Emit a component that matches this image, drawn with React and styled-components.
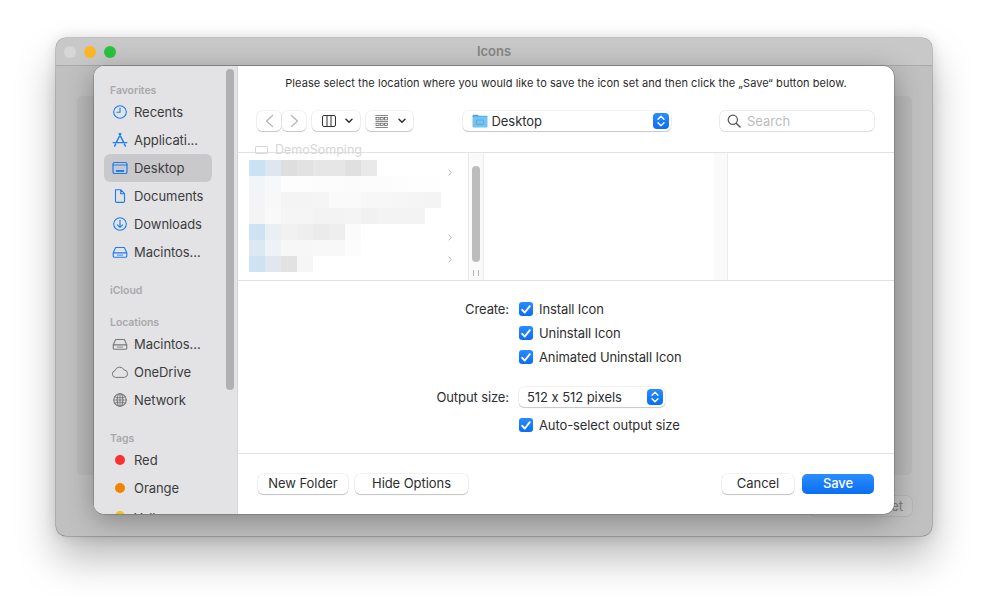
import React from 'react'
import styled, { createGlobalStyle } from 'styled-components'

const GlobalStyle = createGlobalStyle`
  html, body { margin: 0; padding: 0; background: #fff; }
  body { width: 988px; height: 610px; overflow: hidden; font-family: Inter, "Liberation Sans", sans-serif; font-feature-settings: "calt" 0; -webkit-font-smoothing: antialiased; }
`

const Page = styled.div`
  width: 988px;
  height: 610px;
  padding: 38px 0 0 56px;
  box-sizing: border-box;
`
const Window = styled.div`
  position: relative;
  width: 876px;
  height: 498px;
  border-radius: 10px;
  background: #c0c0c0;
  box-shadow: 0 0 0 .5px rgba(0,0,0,.35), 0 22px 40px rgba(0,0,0,.28), 0 0 14px rgba(0,0,0,.12);
  display: flex;
  flex-direction: column;
`
const TitleBar = styled.div`
  position: relative;
  height: 28px;
  flex: none;
  display: flex;
  align-items: center;
  justify-content: center;
  padding-bottom: 2px;
  box-sizing: border-box;
  border-radius: 10px 10px 0 0;
  background: #c8c8c8;
  border-bottom: 1px solid #a9a9a9;
`
const Lights = styled.div`
  position: absolute;
  left: 8px;
  top: 8px;
  display: flex;
  gap: 8px;
`
const Light = styled.span`
  width: 12px;
  height: 12px;
  border-radius: 50%;
  background: ${p => p.$c};
`
const WinTitle = styled.div`
  font-size: 13px;
  font-weight: 600;
  color: #858585;
`
const WinBody = styled.div`
  flex: 1;
  padding: 30px 20px 20px 21px;
  display: flex;
  flex-direction: column;
  border-radius: 0 0 10px 10px;
`
const Panel = styled.div`
  height: 379px;
  border-radius: 5px;
  background: rgba(0,0,0,.035);
`
const GhostBtn = styled.div`
  align-self: flex-end;
  margin-top: 21px;
  width: 102px;
  height: 20px;
  box-sizing: border-box;
  border-radius: 5px;
  background: rgba(255,255,255,.05);
  box-shadow: 0 0 0 .5px rgba(0,0,0,.1);
  color: #7d7d7d;
  font-size: 13px;
  line-height: 20px;
  text-align: center;
  white-space: nowrap;
`

/* sheet */
const Sheet = styled.div`
  position: absolute;
  left: 38px;
  top: 28px;
  width: 800px;
  height: 448px;
  border-radius: 10px;
  overflow: hidden;
  display: flex;
  background: #fff;
  box-shadow: 0 0 0 .5px rgba(0,0,0,.3), 0 6px 28px rgba(0,0,0,.32);
`
const Sidebar = styled.div`
  position: relative;
  width: 144px;
  flex: none;
  box-sizing: border-box;
  padding: 16px 25px 0 10px;
  background: #e3e3e5;
  border-right: 1px solid #d5d5d6;
  overflow: hidden;
  letter-spacing: -.06px;
`
const SideScroll = styled.div`
  position: absolute;
  left: 132px;
  top: 3px;
  width: 8px;
  height: 321px;
  border-radius: 4px;
  background: #b0b0b2;
`
const SideGroup = styled.div`
  margin-bottom: 16px;
`
const SideLabel = styled.div`
  height: 16px;
  line-height: 18px;
  padding-left: 6px;
  font-size: 10.5px;
  font-weight: 600;
  color: #a8a8aa;
`
const SideItem = styled.div`
  height: 28px;
  display: flex;
  align-items: center;
  padding-left: 4px;
  border-radius: 6px;
  font-size: 13px;
  color: #3c3c3e;
  white-space: nowrap;
  background: ${p => (p.$active ? '#c9c9cb' : 'transparent')};
`
const SideIcon = styled.span`
  width: 24px;
  height: 20px;
  margin-right: 2px;
  display: flex;
  align-items: center;
  justify-content: center;
  color: ${p => p.$c || '#1a7cf7'};
`
const TagDot = styled.span`
  width: 10px;
  height: 10px;
  border-radius: 50%;
  background: ${p => p.$c};
`
const TagName = styled.span`
  margin-top: ${p => p.$drop || 0}px;
`

const Main = styled.div`
  flex: 1;
  min-width: 0;
  display: flex;
  flex-direction: column;
`
const Header = styled.div`
  height: 87px;
  flex: none;
  box-sizing: border-box;
  padding-top: 9px;
  border-bottom: 1px solid #e2e2e2;
`
const Message = styled.div`
  height: 17px;
  line-height: 17px;
  text-align: center;
  font-size: 11px;
  letter-spacing: .06px;
  color: #2b2b2b;
  white-space: nowrap;
`
const Toolbar = styled.div`
  margin-top: 19px;
  padding: 0 20px 0 19px;
  display: flex;
  justify-content: space-between;
  align-items: center;
`
const ToolGroup = styled.div`
  display: flex;
  align-items: center;
  gap: ${p => p.$gap || 6}px;
`
const ToolBtn = styled.div`
  width: ${p => p.$w}px;
  height: 20px;
  box-sizing: border-box;
  padding-left: ${p => p.$pl || 0}px;
  border-radius: 5px;
  background: #fff;
  box-shadow: 0 0 0 .5px rgba(0,0,0,.1), 0 1px 1px rgba(0,0,0,.18);
  display: flex;
  align-items: center;
  justify-content: center;
  gap: ${p => p.$gap || 0}px;
`
const Popup = styled.div`
  width: ${p => p.$w}px;
  height: 20px;
  box-sizing: border-box;
  padding: 0 2px 0 ${p => p.$pl}px;
  border-radius: 5px;
  background: #fff;
  box-shadow: 0 0 0 .5px rgba(0,0,0,.1), 0 1px 1px rgba(0,0,0,.18);
  display: flex;
  align-items: center;
  font-size: 13px;
  letter-spacing: -.06px;
  color: #2e2e2e;
  white-space: nowrap;
`
const PopupText = styled.span`
  flex: 1;
  margin-left: ${p => p.$ml || 0}px;
  margin-bottom: 1px;
`
const Stepper = styled.span`
  width: 16px;
  height: 16px;
  border-radius: 4px;
  background: linear-gradient(#2a8cff, #0a6ff0);
  display: flex;
  align-items: center;
  justify-content: center;
`
const SearchBox = styled.div`
  width: 154px;
  height: 20px;
  box-sizing: border-box;
  padding-left: 7px;
  border-radius: 5px;
  background: #fff;
  box-shadow: 0 0 0 .5px rgba(0,0,0,.16), 0 1px 0 rgba(0,0,0,.05);
  display: flex;
  align-items: center;
  gap: 6px;
  font-size: 13px;
  color: #bcbcbc;
`

const Browser = styled.div`
  height: 128px;
  flex: none;
  box-sizing: border-box;
  display: flex;
  border-bottom: 1px solid #e2e2e2;
`
const ListCol = styled.div`
  position: relative;
  width: 231px;
  flex: none;
  box-sizing: border-box;
  padding: 7px 0 0 11px;
  border-right: 1px solid #e8e8e8;
`
const Ghost = styled.div`
  position: absolute;
  left: 17px;
  top: -10px;
  display: flex;
  align-items: center;
  gap: 7px;
  font-size: 12.5px;
  line-height: 14px;
  color: #d6d6d6;
  white-space: nowrap;
`
const GhostIcon = styled.span`
  width: 13px;
  height: 8px;
  box-sizing: border-box;
  border: 1px solid #d8d8d8;
  border-radius: 1px;
`
const RowArrow = styled.svg`
  position: absolute;
  left: 210px;
  top: ${p => p.$top}px;
  color: #b5b5b5;
`
const Track = styled.div`
  position: relative;
  width: ${p => p.$w}px;
  flex: none;
  box-sizing: border-box;
  background: #fafafa;
  border-right: 1px solid #ececec;
`
const Thumb = styled.div`
  position: absolute;
  left: 3px;
  top: 13px;
  width: 8px;
  height: 96px;
  border-radius: 4px;
  background: #bcbcbc;
`
const Grip = styled.div`
  position: absolute;
  left: 4px;
  bottom: 4px;
  width: 2px;
  height: 6px;
  border-left: 1px solid #b5b5b5;
  border-right: 1px solid #b5b5b5;
  padding: 0 1px;
  box-sizing: content-box;
`
const BlankCol = styled.div`
  width: ${p => p.$w}px;
  flex: ${p => (p.$w ? 'none' : 1)};
  box-sizing: border-box;
`

const Options = styled.div`
  flex: 1;
  box-sizing: border-box;
  padding-top: 16px;
  border-bottom: 1px solid #e2e2e2;
`
const OptRow = styled.div`
  display: grid;
  grid-template-columns: 271px auto;
  column-gap: 10px;
  align-items: center;
  height: 24px;
  margin-top: ${p => p.$mt || 0}px;
  font-size: 13px;
  letter-spacing: -.1px;
  color: #2e2e2e;
`
const OptLabel = styled.div`
  text-align: right;
`
const CheckLine = styled.div`
  display: flex;
  align-items: center;
  gap: 6px;
`
const CheckBox = styled.span`
  width: 14px;
  height: 14px;
  border-radius: 3px;
  background: linear-gradient(#2a8cff, #0a6ff0);
  display: flex;
  align-items: center;
  justify-content: center;
`

const Footer = styled.div`
  height: 60px;
  flex: none;
  box-sizing: border-box;
  padding: 20px 20px 0 20px;
  display: flex;
  justify-content: space-between;
  align-items: flex-start;
`
const Btn = styled.div`
  width: ${p => p.$w}px;
  height: 20px;
  line-height: 19px;
  text-align: center;
  border-radius: 5px;
  font-size: 13px;
  letter-spacing: -.06px;
  font-weight: ${p => (p.$primary ? 500 : 400)};
  color: ${p => (p.$primary ? '#fff' : '#2e2e2e')};
  background: ${p => (p.$primary ? 'linear-gradient(#2a8cff, #0a6ff0)' : '#fff')};
  box-shadow: ${p => (p.$primary ? 'none' : '0 0 0 .5px rgba(0,0,0,.1), 0 1px 1px rgba(0,0,0,.2)')};
`

const Svg = ({ w = 16, h = 16, vb = '0 0 16 16', children }) => (
  <svg width={w} height={h} viewBox={vb} fill="none" stroke="currentColor" strokeWidth="1.1" strokeLinecap="round" strokeLinejoin="round">
    {children}
  </svg>
)

const IconClock = () => <Svg><circle cx="8" cy="8" r="6.3" /><path d="M8 4v4.2H5" /></Svg>
const IconApps = () => (
  <Svg><path d="M8.8 1.6 4.2 10.6M7.2 1.6l4.6 9M1.2 10.6h13.6M3.6 12.2l-1 1.9M12.4 12.2l1 1.9" strokeWidth="1.4" /></Svg>
)
const IconDesktop = () => (
  <Svg><rect x="1" y="2.5" width="14" height="11" rx="1.6" strokeWidth="1.2" /><path d="M1 5h14" /><path d="M4 11h8" strokeWidth="2" strokeLinecap="butt" /></Svg>
)
const IconDoc = () => <Svg><path d="M3.5 1.7h5.2l3.8 4v7.4a1.3 1.3 0 0 1-1.3 1.3H4.8a1.3 1.3 0 0 1-1.3-1.3V1.7zM8.7 1.7v4h3.8" /></Svg>
const IconDown = () => <Svg><circle cx="8" cy="8" r="6.3" /><path d="M8 4.3v7M5.4 8.8 8 11.3l2.6-2.5" /></Svg>
const IconDisk = () => (
  <Svg>
    <path d="M3.6 3.5h8.8l2.4 5.4v3a1.4 1.4 0 0 1-1.4 1.4H2.6a1.4 1.4 0 0 1-1.4-1.4v-3zM1.2 8.9h13.6" />
    <path d="M5.8 11.1h.5M7.8 11.1h.5M9.8 11.1h.5" strokeWidth="1.2" />
  </Svg>
)
const IconCloud = () => (
  <svg width="18" height="14" viewBox="0 0 18 14" fill="#e3e3e5" stroke="currentColor" strokeWidth="1" strokeLinejoin="round">
    <path d="M4.6 12.4a3.4 3.4 0 0 1-.6-6.7 4.8 4.8 0 0 1 9-.8 3.8 3.8 0 0 1 .6 7.5z" />
  </svg>
)
const IconGlobe = () => (
  <Svg>
    <circle cx="8" cy="8" r="6.2" />
    <ellipse cx="8" cy="8" rx="2.8" ry="6.2" />
    <path d="M2.6 4.8c3 1.4 7.8 1.4 10.8 0M2.6 11.2c3-1.4 7.8-1.4 10.8 0M1.8 8h12.4M8 1.8v12.4" strokeWidth=".9" />
  </Svg>
)
const IconBack = () => <svg width="9" height="14" viewBox="0 0 9 14" fill="none" stroke="#b4b4b4" strokeWidth="1.2" strokeLinecap="round" strokeLinejoin="round"><path d="M7.5 1.5 1.5 7l6 5.5" /></svg>
const IconForward = () => <svg width="9" height="14" viewBox="0 0 9 14" fill="none" stroke="#b4b4b4" strokeWidth="1.2" strokeLinecap="round" strokeLinejoin="round"><path d="M1.5 1.5l6 5.5-6 5.5" /></svg>
const IconColumns = () => (
  <svg width="14" height="12" viewBox="0 0 14 12" fill="none" stroke="#333" strokeWidth="1"><rect x=".5" y=".5" width="13" height="11" rx="1.5" /><path d="M5 .5v11M9 .5v11" /></svg>
)
const IconGallery = () => (
  <svg width="14" height="13" viewBox="0 0 14 13" fill="none" stroke="#555" strokeWidth=".7">
    <path d="M.5.5h12.5M.5 6.5h12.5M.5 12.5h12.5" />
    <rect x="1" y="2.5" width="3" height="2.4" /><rect x="5.2" y="2.5" width="3" height="2.4" /><rect x="9.4" y="2.5" width="3" height="2.4" />
    <rect x="1" y="8.2" width="3" height="2.4" /><rect x="5.2" y="8.2" width="3" height="2.4" /><rect x="9.4" y="8.2" width="3" height="2.4" />
  </svg>
)
const IconCaret = () => (
  <svg width="8" height="6" viewBox="0 0 8 6" fill="none" stroke="#333" strokeWidth="1.5" strokeLinecap="round" strokeLinejoin="round"><path d="M1 1.2l3 3 3-3" /></svg>
)
const IconUpDown = () => (
  <svg width="8" height="12" viewBox="0 0 8 12" fill="none" stroke="#fff" strokeWidth="1.4" strokeLinecap="round" strokeLinejoin="round"><path d="M1 4.3 4 1.2l3 3.1M1 7.7l3 3.1 3-3.1" /></svg>
)
const IconFolder = () => (
  <svg width="16" height="14" viewBox="0 0 16 14">
    <path d="M.5 2c0-.8.5-1.2 1.2-1.2h3.6c.6 0 .9.5 1.4 1h8.1c.4 0 .7.3.7.7V3H.5z" fill="#4a9fd8" />
    <rect x=".5" y="2.6" width="15" height="10.9" rx="1.2" fill="#74c3f2" />
    <rect x="4.5" y="6" width="7" height="4.4" rx=".6" fill="none" stroke="#4ea6dc" strokeWidth=".8" />
  </svg>
)
const IconSearch = () => (
  <svg width="14" height="14" viewBox="0 0 14 14" fill="none" stroke="#555" strokeWidth="1.2" strokeLinecap="round"><circle cx="5.8" cy="5.8" r="4.6" /><path d="M9.2 9.2l3.8 3.8" strokeWidth="1.5" /></svg>
)
const IconCheck = () => (
  <svg width="10" height="9" viewBox="0 0 10 9" fill="none" stroke="#fff" strokeWidth="1.9" strokeLinecap="round" strokeLinejoin="round"><path d="M1.2 4.8 3.8 7.5 8.8 1.2" /></svg>
)

const favorites = [
  { name: 'Recents', icon: <IconClock /> },
  { name: 'Applicati...', icon: <IconApps /> },
  { name: 'Desktop', icon: <IconDesktop />, active: true },
  { name: 'Documents', icon: <IconDoc /> },
  { name: 'Downloads', icon: <IconDown /> },
  { name: 'Macintos...', icon: <IconDisk /> },
]
const locations = [
  { name: 'Macintos...', icon: <IconDisk /> },
  { name: 'OneDrive', icon: <IconCloud /> },
  { name: 'Network', icon: <IconGlobe /> },
]
const tags = [
  { name: 'Red', color: '#fb3131' },
  { name: 'Orange', color: '#f08400' },
  { name: 'Yellow', color: '#f2c511', drop: 3 },
]

// pixelated file names, 16px blocks
const mosaic = [
  ['#c9e3f5', '#dee6ef', '#dedede', '#e2e2e2', '#e6e6e6', '#e6e6e6', '#e0e0e0', '#e9e9e9'],
  ['#f1f5f7', '#f6f8fa', '#fdfdfd', '#fdfdfd', '#fcfcfc', '#fcfcfc', '#fbfbfb', '#fcfcfc', '#fcfcfc', '#fdfdfd', '#fefefe', '#fefefe'],
  ['#f4f3f5', '#f8f8f8', '#f4f4f4', '#f4f4f4', '#f5f5f5', '#fafafa', '#fafafa', '#f7f7f7', '#f7f7f7', '#f6f6f6', '#f5f5f5', '#f4f4f4'],
  ['#f4f4f4', '#f9f9f9', '#f5f5f5', '#f5f5f5', '#f3f3f3', '#f3f3f3', '#f4f4f4', '#f1f1f1', '#f3f3f3', '#f3f3f3', '#f3f3f3'],
  ['#cde3f3', '#e8f0f4', '#f1f1f1', '#eeeeee', '#ebebeb', '#eeeeee', '#fbfbfb'],
  ['#dce9f2', '#eef2f7', '#f7f7f7', '#f7f7f7', '#f8f8f8', '#f8f8f8', '#fcfcfc'],
  ['#cde3f3', '#e0e7ef', '#e2e2e2', '#f6f6f6'],
]

const Arrow = ({ top }) => (
  <RowArrow $top={top} width="4" height="7" viewBox="0 0 4 7" fill="none" stroke="currentColor" strokeWidth="1"><path d="M.7.7 3.3 3.5.7 6.3" /></RowArrow>
)

const Check = ({ children }) => (
  <CheckLine><CheckBox><IconCheck /></CheckBox>{children}</CheckLine>
)

export default function App() {
  return (
    <Page>
      <GlobalStyle />
      <Window>
        <TitleBar>
          <Lights>
            <Light $c="#d6d6d6" />
            <Light $c="#fdb728" />
            <Light $c="#27c43f" />
          </Lights>
          <WinTitle>Icons</WinTitle>
        </TitleBar>
        <WinBody>
          <Panel />
          <GhostBtn>Save Icon Set</GhostBtn>
        </WinBody>

        <Sheet>
          <Sidebar>
            <SideScroll />
            <SideGroup>
              <SideLabel>Favorites</SideLabel>
              {favorites.map(f => (
                <SideItem key={f.name} $active={f.active}>
                  <SideIcon>{f.icon}</SideIcon>{f.name}
                </SideItem>
              ))}
            </SideGroup>
            <SideGroup>
              <SideLabel>iCloud</SideLabel>
            </SideGroup>
            <SideGroup>
              <SideLabel>Locations</SideLabel>
              {locations.map(f => (
                <SideItem key={f.name}>
                  <SideIcon $c="#77777a">{f.icon}</SideIcon>{f.name}
                </SideItem>
              ))}
            </SideGroup>
            <SideGroup>
              <SideLabel>Tags</SideLabel>
              {tags.map(t => (
                <SideItem key={t.name}>
                  <SideIcon><TagDot $c={t.color} /></SideIcon>
                  <TagName $drop={t.drop}>{t.name}</TagName>
                </SideItem>
              ))}
            </SideGroup>
          </Sidebar>

          <Main>
            <Header>
              <Message>Please select the location where you would like to save the icon set and then click the „Save“ button below.</Message>
              <Toolbar>
                <ToolGroup>
                  <ToolGroup $gap={1}>
                    <ToolBtn $w={24}><IconBack /></ToolBtn>
                    <ToolBtn $w={24}><IconForward /></ToolBtn>
                  </ToolGroup>
                  <ToolBtn $w={48} $gap={9} $pl={2}><IconColumns /><IconCaret /></ToolBtn>
                  <ToolBtn $w={47} $gap={9} $pl={2}><IconGallery /><IconCaret /></ToolBtn>
                </ToolGroup>
                <Popup $w={208} $pl={9}>
                  <IconFolder />
                  <PopupText $ml={4}>Desktop</PopupText>
                  <Stepper><IconUpDown /></Stepper>
                </Popup>
                <SearchBox><IconSearch />Search</SearchBox>
              </Toolbar>
            </Header>

            <Browser>
              <ListCol>
                <Ghost><GhostIcon />DemoSomping</Ghost>
                <svg width="192" height="112" shapeRendering="crispEdges" style={{ display: 'block' }}>
                  {mosaic.map((row, y) => row.map((c, x) => (
                    <rect key={x + '-' + y} x={x * 16} y={y * 16} width="16" height="16" fill={c} />
                  )))}
                </svg>
                <Arrow top={16} />
                <Arrow top={81} />
                <Arrow top={103} />
              </ListCol>
              <Track $w={15}>
                <Thumb />
                <Grip />
              </Track>
              <BlankCol $w={230} />
              <Track $w={14} />
              <BlankCol />
            </Browser>

            <Options>
              <OptRow><OptLabel>Create:</OptLabel><Check>Install Icon</Check></OptRow>
              <OptRow><span /><Check>Uninstall Icon</Check></OptRow>
              <OptRow><span /><Check>Animated Uninstall Icon</Check></OptRow>
              <OptRow $mt={16}>
                <OptLabel>Output size:</OptLabel>
                <Popup $w={146} $pl={8}>
                  <PopupText>512 x 512 pixels</PopupText>
                  <Stepper><IconUpDown /></Stepper>
                </Popup>
              </OptRow>
              <OptRow $mt={4}><span /><Check>Auto-select output size</Check></OptRow>
            </Options>

            <Footer>
              <ToolGroup $gap={7}>
                <Btn $w={90}>New Folder</Btn>
                <Btn $w={113}>Hide Options</Btn>
              </ToolGroup>
              <ToolGroup $gap={8}>
                <Btn $w={72}>Cancel</Btn>
                <Btn $w={72} $primary>Save</Btn>
              </ToolGroup>
            </Footer>
          </Main>
        </Sheet>
      </Window>
    </Page>
  )
}
